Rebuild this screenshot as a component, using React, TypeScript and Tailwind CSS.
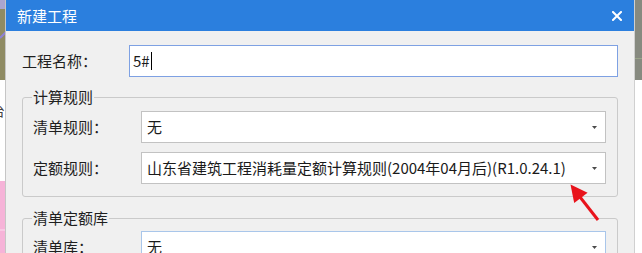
import React from "react";

function Arrow() {
  return (
    <svg width="5" height="3" viewBox="0 0 5 3" className="shrink-0">
      <polygon points="0,0 5,0 2.5,3" fill="#4a4a4a" />
    </svg>
  );
}

function Select({ value, active }: { value: string; active?: boolean }) {
  return (
    <div
      className={
        "flex-1 h-[32px] bg-white border flex items-center justify-between pl-[5px] pr-[8px] " +
        (active ? "border-[#a9c6ea]" : "border-[#c2c2c2]")
      }
    >
      <span className="text-[15px] leading-[20px] text-[#1a1a1a] whitespace-nowrap">{value}</span>
      <Arrow />
    </div>
  );
}

function Row({ label, value, active }: { label: string; value: string; active?: boolean }) {
  return (
    <div className="flex items-center">
      <span className="w-[108px] shrink-0 text-[15px] leading-[20px] text-[#1f1f1f]">{label}</span>
      <Select value={value} active={active} />
    </div>
  );
}

export default function App() {
  return (
    <div className="relative w-[642px] h-[253px] overflow-hidden flex bg-white font-['Noto_Sans_CJK_SC',sans-serif]">
      {/* left background strip */}
      <div className="w-[6px] shrink-0 flex flex-col overflow-hidden border-r border-[#c6c6c6]">
        <svg width="6" height="80" viewBox="0 0 6 80" className="block shrink-0">
          <rect x="0" y="0" width="6" height="80" fill="#8f8b63" />
          <rect x="0" y="0" width="6" height="9" fill="#aaa5cf" />
          <line x1="0" y1="38" x2="6" y2="32" stroke="#8e82d6" strokeWidth="2" />
        </svg>
        <div className="h-[101px] bg-white relative overflow-hidden">
          <span className="absolute left-[-9px] top-[22px] text-[14px] leading-[16px] text-[#444]">台</span>
        </div>
        <div className="flex-1 bg-[#f6b3d8] flex flex-col">
          <div className="h-[48px]" />
          <div className="h-[2px] bg-[#f9c8e4]" />
        </div>
      </div>

      {/* dialog */}
      <div className="w-[628px] shrink-0 flex flex-col bg-[#f0f0f0]">
        <div className="h-[31px] shrink-0 bg-[#2b7fde] flex items-center justify-between pl-[11px] pr-[12px]">
          <span className="text-[15px] leading-[20px] text-white">新建工程</span>
          <svg width="10" height="10" viewBox="0 0 10 10">
            <path d="M1 1 L9 9 M9 1 L1 9" stroke="white" strokeWidth="2" strokeLinecap="square" />
          </svg>
        </div>

        <div className="px-[16px] pt-[14px]">
          <div className="flex items-center h-[32px]">
            <span className="w-[107px] shrink-0 text-[15px] leading-[20px] text-[#1f1f1f]">工程名称：</span>
            <div className="flex-1 h-full bg-white border border-[#7ea1e3] flex items-center pl-[3px]">
              <span className="text-[15px] leading-[20px] text-[#1a1a1a]">5#</span>
              <span className="w-px h-[18px] bg-black ml-[1px]" />
            </div>
          </div>

          <fieldset className="mt-[11px] border border-[#cacaca] rounded-[3px] pl-[10px] pr-[11px] pt-[5px] pb-[12px]">
            <legend className="-ml-[1px] px-[1px] text-[15px] leading-[18px] text-[#1f1f1f]">计算规则</legend>
            <div className="flex flex-col gap-[9px]">
              <Row label="清单规则：" value="无" />
              <Row label="定额规则：" value="山东省建筑工程消耗量定额计算规则(2004年04月后)(R1.0.24.1)" />
            </div>
          </fieldset>

          <fieldset className="mt-[12px] border border-[#cacaca] rounded-[3px] pl-[10px] pr-[11px] pt-[4px] pb-[12px]">
            <legend className="-ml-[1px] px-[1px] text-[15px] leading-[18px] text-[#1f1f1f]">清单定额库</legend>
            <div className="flex flex-col gap-[9px]">
              <Row label="清单库：" value="无" active />
              <Row label="定额库：" value="无" />
            </div>
          </fieldset>
        </div>
      </div>

      {/* right background strip */}
      <div className="w-[8px] shrink-0 flex flex-col border-l border-[#d0d0d0]">
        <div className="h-[80px] bg-[#878a80] flex flex-col">
          <div className="h-[58px]" />
          <div className="h-px bg-[#9aa58a]" />
        </div>
        <div className="flex-1 bg-white" />
      </div>

      {/* red annotation arrow */}
      <svg
        className="absolute left-0 top-0 pointer-events-none"
        width="642"
        height="253"
        viewBox="0 0 642 253"
      >
        <line x1="598" y1="220" x2="580" y2="197" stroke="#e8131b" strokeWidth="3" />
        <polygon points="570.5,184.5 574.2,203.1 587.6,192.7" fill="#e8131b" />
      </svg>
    </div>
  );
}
